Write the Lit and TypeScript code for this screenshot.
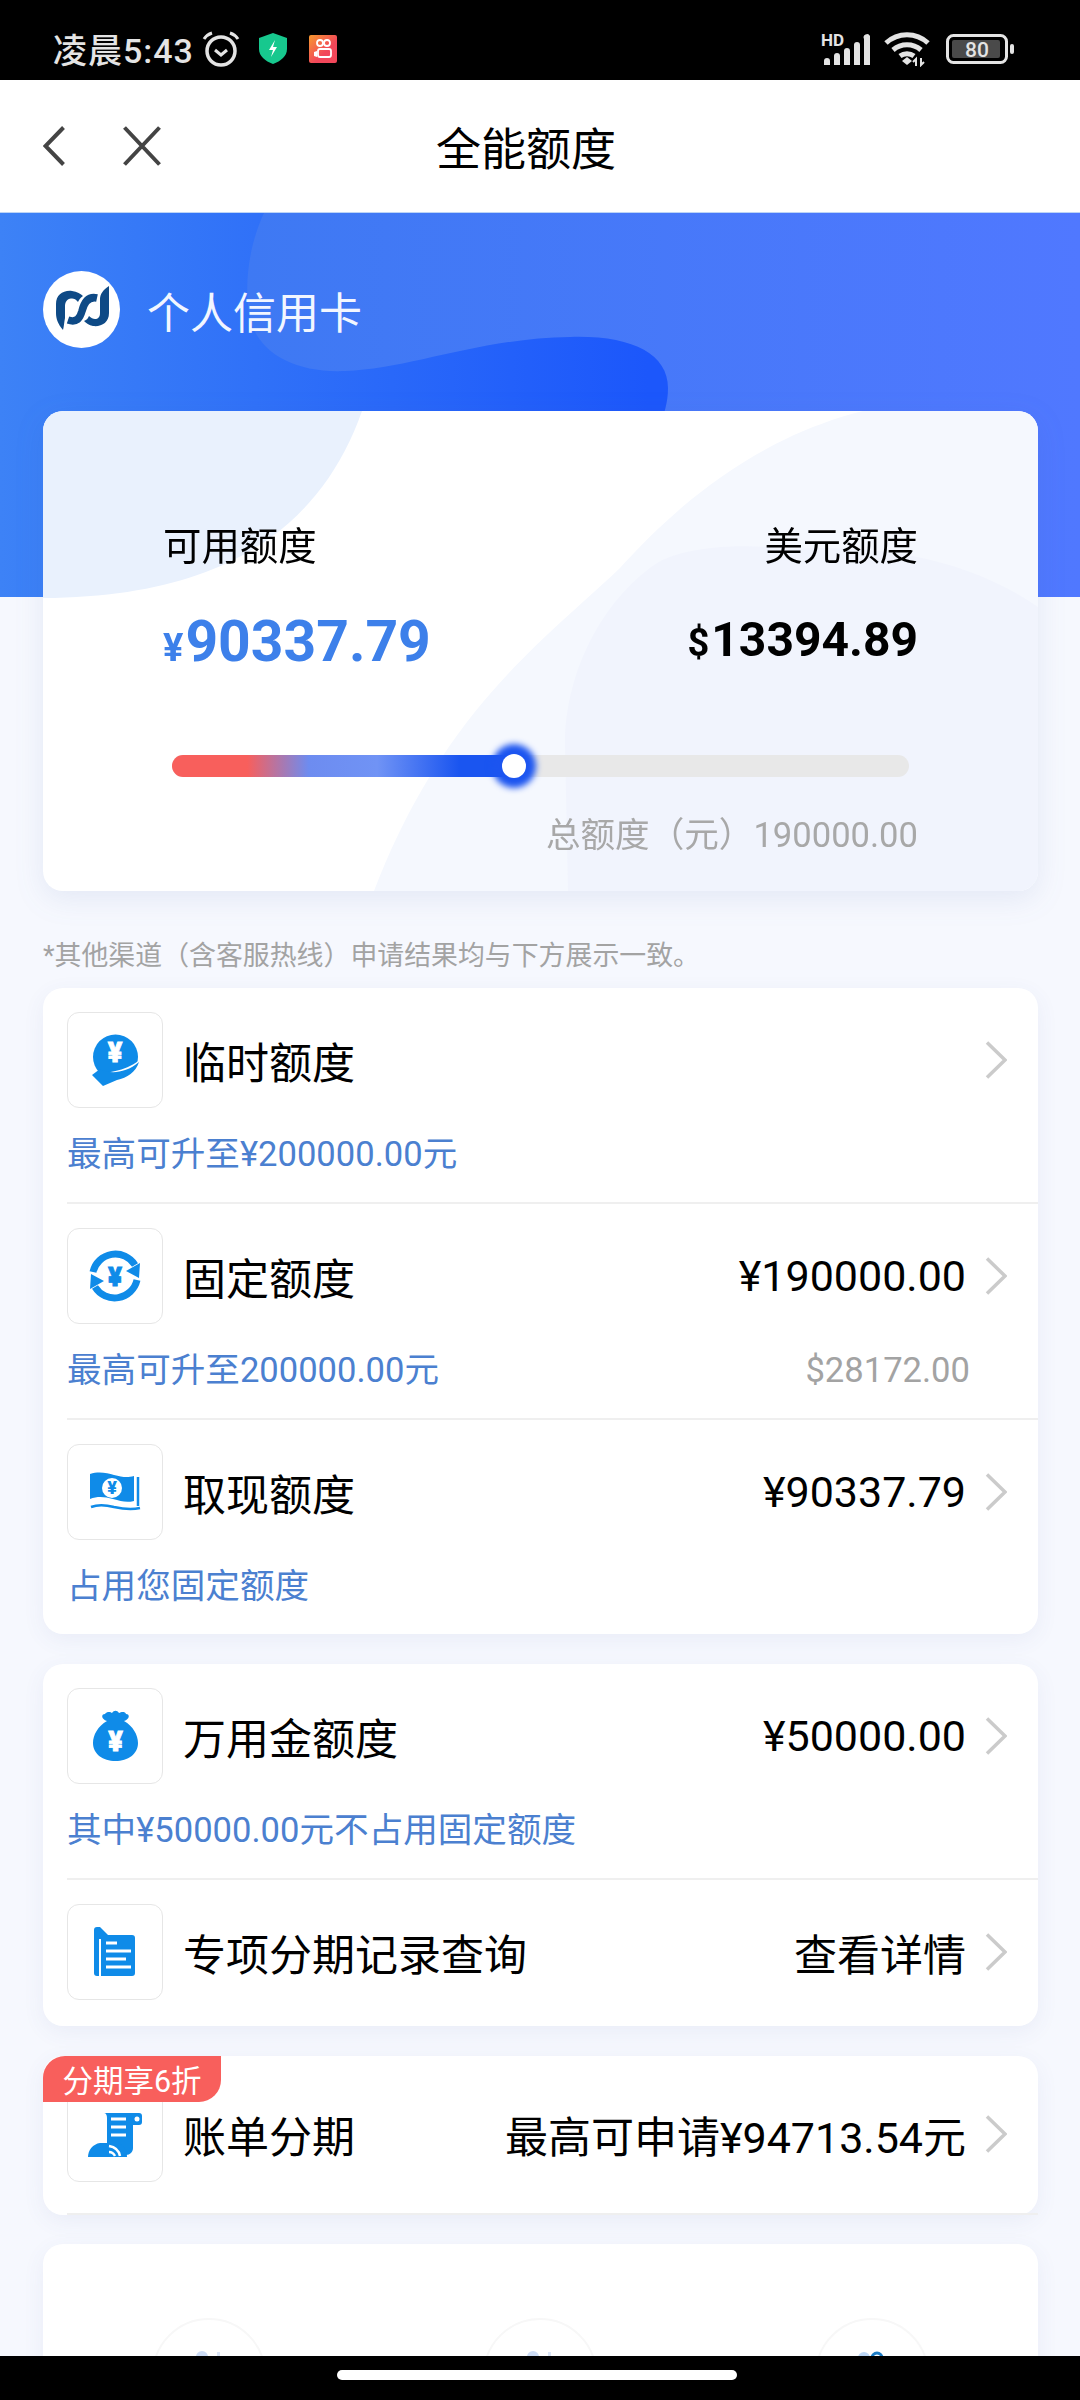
import { LitElement, html, css, svg } from "lit";
import { customElement } from "lit/decorators.js";

const yen = (x: number, y: number, size: number) =>
  svg`<text x=${x} y=${y} font-size=${size} font-weight="900" text-anchor="middle" fill="#fff" stroke="#fff" stroke-width="0.8" font-family="Roboto, sans-serif">¥</text>`;

// line icons of the list, all in the 96px box
const icons: Record<string, unknown> = {
  hand: svg`
    <circle cx="48.5" cy="45" r="22.5" fill="#0f8be8"/>
    <path d="M18 60C34 62 58 62 78 44L78 80 18 80z" fill="#fff"/>
    <path d="M25 63l8-6C42 62 58 62 72 50 69 60 60 66 50 68L36 74z" fill="#0f8be8"/>
    ${yen(48, 50, 27)}`,
  cycle: svg`
    <path d="M26 44A23 23 0 0 1 68 37" fill="none" stroke="#0f8be8" stroke-width="7"/>
    <path d="M70 52A23 23 0 0 1 28 59" fill="none" stroke="#0f8be8" stroke-width="7"/>
    <path d="M73 35l-1 15-13-7zM23 61l1-15 13 7z" fill="#0f8be8"/>
    <text x="48" y="58" font-size="26" font-weight="900" text-anchor="middle" fill="#0f8be8" stroke="#0f8be8" stroke-width="0.8" font-family="Roboto, sans-serif">¥</text>`,
  bill: svg`
    <path d="M23 30c9-3 17-1 24 1 8 2 13 3 20 1v25c-8 2-13 0-21-2-8-2-15-3-23 0z" fill="#0f8be8"/>
    <circle cx="45" cy="44" r="10" fill="#fff"/>
    <path d="M71 33v29M24 63c8-3 15-2 23 0 9 2 17 3 26 1" fill="none" stroke="#0f8be8" stroke-width="2.5"/>
    <text x="45" y="50" font-size="18" font-weight="900" text-anchor="middle" fill="#0f8be8" font-family="Roboto, sans-serif">¥</text>`,
  bag: svg`
    <path d="M40 33C34 31 34 26 38 26 40 23 44 24 45 25 47 22 50 22 52 25 54 24 58 23 59 26 63 26 63 31 57 33 66 38 71 47 71 55 71 66 61 73 48.500 73 36 73 26 66 26 55 26 47 31 38 40 33Z" fill="#0f8be8"/>
    ${yen(48.5, 63, 27)}`,
  doc: svg`
    <path d="M27 26c0-2 1-3 3-3h3l8 8h24c2 0 3 1 3 3v35c0 2-1 3-3 3H30c-2 0-3-1-3-3z" fill="#0f8be8"/>
    <path d="M33 35v37" stroke="#fff" stroke-width="2"/>
    <path d="M39 39h11M39 47h25M39 55h20M39 63h25" stroke="#fff" stroke-width="3"/>`,
  scroll: svg`
    <path d="M37 27h35c2 0 3 1 3 3v6c0 2-1 3-3 3h-6v23c0 4-3 7-7 7H40V32c0-3-1-5-3-5z" fill="#0f8be8"/>
    <path d="M44 33h15M44 41h15M44 49h15" stroke="#fff" stroke-width="3"/>
    <circle cx="70" cy="33" r="2.5" fill="#fff"/>
    <path d="M21 71c0-7 5-13 12-14h18c6 2 9 7 9 14z" fill="#0f8be8"/>
    <path d="M42 60c6 1 10 5 11 10M42 66c3 0 5 2 6 4" fill="none" stroke="#fff" stroke-width="2.5"/>`,
};

interface Row {
  icon: string;
  title: string;
  value?: string;
  sub?: string;
  subRight?: string;
}

const groups: Row[][] = [
  [
    { icon: "hand", title: "临时额度", sub: "最高可升至¥200000.00元" },
    { icon: "cycle", title: "固定额度", value: "¥190000.00", sub: "最高可升至200000.00元", subRight: "$28172.00" },
    { icon: "bill", title: "取现额度", value: "¥90337.79", sub: "占用您固定额度" },
  ],
  [
    { icon: "bag", title: "万用金额度", value: "¥50000.00", sub: "其中¥50000.00元不占用固定额度" },
    { icon: "doc", title: "专项分期记录查询", value: "查看详情" },
  ],
];

@customElement("app-root")
export class AppRoot extends LitElement {
  static styles = css`
    :host {
      display: block;
      font-family: Roboto, "Noto Sans CJK SC", sans-serif;
    }
    .page {
      width: 1080px;
      height: 2400px;
      display: flex;
      flex-direction: column;
      overflow: hidden;
      background: #f6f8fe;
    }
    .status {
      height: 80px;
      flex: none;
      box-sizing: border-box;
      background: #000;
      color: #e4e4e4;
      display: flex;
      align-items: center;
      padding: 17px 65px 0 53px;
    }
    .status svg {
      display: block;
      flex: none;
    }
    .time {
      font-size: 34px;
      font-weight: 500;
      letter-spacing: 1px;
      margin-right: 7px;
    }
    .spacer {
      flex: 1;
    }
    .nav {
      height: 132px;
      flex: none;
      background: #fff;
      border-bottom: 1px solid #bcd4f6;
      display: flex;
      align-items: center;
      padding-left: 43px;
      color: #000;
    }
    .nav svg {
      display: block;
    }
    .nav .title {
      font-size: 45px;
      margin-left: 275px;
    }
    .scroll {
      flex: 1;
      min-height: 0;
      overflow: hidden;
    }
    .hero {
      height: 384px;
      position: relative;
      background: linear-gradient(90deg, #3d82f6, #1c57fb 60%);
      overflow: hidden;
    }
    .hero-bg {
      position: absolute;
      inset: 0;
    }
    .hero-head {
      position: relative;
      display: flex;
      align-items: center;
      gap: 27px;
      padding: 58px 0 0 43px;
      color: #f2f6ff;
      font-size: 43px;
    }
    .logo {
      display: block;
      flex: none;
    }
    .limit {
      position: relative;
      margin: -186px 42px 0 43px;
      height: 480px;
      box-sizing: border-box;
      border-radius: 20px;
      background: #fff;
      overflow: hidden;
      padding: 111px 120px 0;
    }
    .limit-wrap {
      filter: drop-shadow(0 8px 14px rgba(70, 100, 170, 0.1));
    }
    .limit-bg {
      position: absolute;
      inset: 0;
    }
    .limit-grid {
      position: relative;
      display: flex;
      justify-content: space-between;
    }
    .limit-col.right {
      text-align: right;
    }
    .limit-label {
      font-size: 38.4px;
      line-height: 50px;
      color: #000;
    }
    .amount {
      margin-top: 36px;
      height: 68px;
      font-weight: 700;
      font-size: 57px;
      line-height: 68px;
      color: #3d80ea;
    }
    .amount small {
      font-size: 38px;
      margin-right: 2px;
    }
    .amount.usd {
      margin-top: 34px;
      font-size: 48px;
      color: #000;
    }
    .track {
      position: relative;
      height: 22px;
      margin: 79px 9px 0;
      background: #e8e8e8;
      border-radius: 11px;
    }
    .fill {
      height: 100%;
      border-radius: 11px 0 0 11px;
      background: linear-gradient(90deg, #f85f5c 22%, #6d8cf0 40%, #7093f5 60%, #1a55f0 84%);
    }
    .thumb {
      position: absolute;
      top: -1px;
      width: 24px;
      height: 24px;
      margin-left: -12px;
      border-radius: 50%;
      background: #fff;
      box-shadow: 0 0 6px 10px #1c55f0;
    }
    .total {
      position: relative;
      margin-top: 36px;
      font-size: 34.6px;
      line-height: 44px;
      text-align: right;
      color: #a8a8a8;
    }
    .note {
      margin: 45px 0 12px 43px;
      font-size: 26.9px;
      line-height: 40px;
      color: #a3a3a3;
    }
    .group {
      position: relative;
      margin: 0 42px 30px 43px;
      background: #fff;
      border-radius: 20px;
      box-shadow: 0 6px 22px rgba(70, 90, 150, 0.07);
    }
    .group.third {
      margin-bottom: 29px;
    }
    .row {
      margin-left: 24px;
      padding: 24px 31px 26px 0;
      border-bottom: 2px solid #efefef;
    }
    .row:last-child {
      border-bottom: none;
    }
    .row.single {
      padding-top: 30px;
      padding-bottom: 31px;
    }
    .main {
      display: flex;
      align-items: center;
    }
    .icon-box {
      width: 96px;
      height: 96px;
      flex: none;
      box-sizing: border-box;
      border: 1.5px solid #e6e6e6;
      border-radius: 12px;
      background: #fff;
    }
    .icon-box svg {
      display: block;
      margin: -1.5px;
    }
    .row-title {
      flex: 1;
      margin-left: 20px;
      font-size: 43px;
      color: #000;
    }
    .row-value {
      font-size: 43px;
      color: #000;
    }
    .chev {
      display: block;
      flex: none;
      margin-left: 19px;
    }
    .sub {
      display: flex;
      justify-content: space-between;
      margin-top: 24px;
      padding-right: 37px;
      font-size: 34.6px;
      line-height: 44px;
      color: #4b80d0;
    }
    .sub .usd {
      color: #a3a3a3;
    }
    .badge {
      position: absolute;
      left: 0;
      top: 0;
      width: 178px;
      height: 46px;
      display: flex;
      align-items: center;
      justify-content: center;
      background: #f85f5c;
      color: #fff;
      font-size: 30.5px;
      border-radius: 22px 0 22px 0;
    }
    .promo {
      height: 200px;
      margin-bottom: 0;
      display: grid;
      grid-template-columns: repeat(3, 1fr);
      padding-top: 74px;
      box-sizing: border-box;
    }
    .circle {
      justify-self: center;
      position: relative;
      width: 114px;
      height: 114px;
      border-radius: 50%;
      border: 2px solid #f7f7f7;
      box-sizing: border-box;
    }
    .circle svg {
      display: block;
      margin: 30px auto 0;
    }
    .bottom {
      height: 44px;
      flex: none;
      background: #000;
      display: flex;
      justify-content: center;
    }
    .home {
      width: 400px;
      height: 10px;
      margin: 14px 6px 0 0;
      border-radius: 5px;
      background: #fff;
    }
  `;

  private chevron() {
    return html`<svg class="chev" width="22" height="38" viewBox="0 0 22 38">
      <path d="M2 1.5 20 19 2 36.5" fill="none" stroke="#cbcbcb" stroke-width="3.5" />
    </svg>`;
  }

  private iconBox(name: string) {
    return html`<div class="icon-box">
      <svg width="96" height="96" viewBox="0 0 96 96">${icons[name]}</svg>
    </div>`;
  }

  private renderRow(r: Row) {
    return html`<div class="row">
      <div class="main">
        ${this.iconBox(r.icon)}
        <div class="row-title">${r.title}</div>
        ${r.value ? html`<div class="row-value">${r.value}</div>` : ""}
        ${this.chevron()}
      </div>
      ${r.sub
        ? html`<div class="sub">
            <span>${r.sub}</span>
            ${r.subRight ? html`<span class="usd">${r.subRight}</span>` : ""}
          </div>`
        : ""}
    </div>`;
  }

  private statusBar() {
    return html`<div class="status">
      <span class="time">凌晨5:43</span>
      <svg width="40" height="38" viewBox="0 0 40 38">
        <circle cx="20" cy="21" r="14" fill="none" stroke="#e4e4e4" stroke-width="3.5" />
        <path d="M14 20l6 5 6-5" fill="none" stroke="#e4e4e4" stroke-width="3" />
        <path d="M3 9c2-3 5-5 8-6M37 9c-2-3-5-5-8-6" fill="none" stroke="#e4e4e4" stroke-width="3" />
      </svg>
      <svg style="margin-left:18px" width="28" height="31" viewBox="0 0 28 31">
        <path d="M14 0l14 5v11c0 7-6 12-14 15C6 28 0 23 0 16V5z" fill="#17c88e" />
        <path d="M16 7l-6 10h4l-2 7 6-10h-4z" fill="#fff" />
      </svg>
      <svg style="margin-left:22px" width="28" height="28" viewBox="0 0 28 28">
        <defs>
          <linearGradient id="ks" x1="0" y1="0" x2="1" y2="1">
            <stop offset="0" stop-color="#f79a2e" />
            <stop offset="0.6" stop-color="#f2475a" />
          </linearGradient>
        </defs>
        <rect width="28" height="28" rx="2" fill="url(#ks)" />
        <circle cx="11" cy="8" r="3" fill="none" stroke="#fff" stroke-width="1.8" />
        <circle cx="18" cy="8" r="3" fill="none" stroke="#fff" stroke-width="1.8" />
        <rect x="9" y="14" width="13" height="8" rx="2" fill="none" stroke="#fff" stroke-width="1.8" />
        <path d="M8 16l-3 1v4l3 1z" fill="#fff" />
      </svg>
      <div class="spacer"></div>
      <svg width="50" height="36" viewBox="0 0 50 36">
        <text x="0" y="15" font-size="17" font-weight="700" fill="#e4e4e4" font-family="Roboto, sans-serif">HD</text>
        <path d="M3 34v-4a3 3 0 0 1 6 0v4zM13 34V25a3 3 0 0 1 6 0v9zM23 34V20a3 3 0 0 1 6 0v14zM33 34V14a3 3 0 0 1 6 0v20zM43 34V8a3 3 0 0 1 6-3v29z" fill="#e4e4e4" />
      </svg>
      <svg style="margin-left:12px" width="48" height="36" viewBox="0 0 48 36">
        <path d="M3 12c12-11 30-11 42 0M10 19c8-7 20-7 28 0M17 25c4-3 10-3 14 0" fill="none" stroke="#e4e4e4" stroke-width="5" />
        <path d="M19 30l5-4 5 4-5 4z" fill="#e4e4e4" />
        <path d="M33 35v-7l-3 3M38 27v7l3-3" fill="none" stroke="#e4e4e4" stroke-width="2" />
      </svg>
      <svg style="margin-left:15px" width="69" height="30" viewBox="0 0 69 30">
        <rect x="1.5" y="1.5" width="59" height="27" rx="6" fill="none" stroke="#e4e4e4" stroke-width="3" />
        <rect x="6" y="6" width="48" height="18" rx="2" fill="#4a4a4a" />
        <rect x="64" y="10" width="4" height="10" rx="2" fill="#e4e4e4" />
        <text x="31" y="23" font-size="21" font-weight="500" text-anchor="middle" fill="#e4e4e4" font-family="Roboto, sans-serif">80</text>
      </svg>
    </div>`;
  }

  render() {
    return html`<div class="page">
      ${this.statusBar()}
      <div class="nav">
        <svg width="22" height="40" viewBox="0 0 22 40">
          <path d="M20.5 1.5 2.5 20l18 18.5" fill="none" stroke="#444" stroke-width="4" />
        </svg>
        <svg style="margin-left:58px" width="38" height="40" viewBox="0 0 38 40">
          <path d="M1.5 1.5l35 37M36.5 1.5l-35 37" fill="none" stroke="#444" stroke-width="4" />
        </svg>
        <div class="title">全能额度</div>
      </div>
      <div class="scroll">
        <div class="hero">
          <svg class="hero-bg" width="1080" height="384" viewBox="0 0 1080 384">
            <defs>
              <linearGradient id="heroLight" x1="0" y1="0" x2="1" y2="0">
                <stop offset="0" stop-color="#3e79f3" />
                <stop offset="1" stop-color="#5078ff" />
              </linearGradient>
            </defs>
            <path
              d="M264 0C250 30 243 70 250 105 258 140 295 160 345 158 410 156 480 125 570 124 630 122 668 140 668 175 668 190 664 200 660 215L660 384 1080 384 1080 0Z"
              fill="url(#heroLight)"
            />
          </svg>
          <div class="hero-head">
            <svg class="logo" width="77" height="77" viewBox="0 0 77 77">
              <circle cx="38.5" cy="38.5" r="38.5" fill="#fff" />
              <path d="M20 59C15 53 13 48 13 42V33C13 24 20 19 29 20 34 20.500 38 23 40 25 37 27 36 29 35 31 33 28 30 27 28 27.500 24 28 22 31 22 35V47C21 52 21 55 20 59Z" fill="#0e4a86" />
              <path d="M25 49C34 52 37 47 39 40 41 32 45 25 54 27" fill="none" stroke="#0e4a86" stroke-width="7.500" />
              <path d="M66 15V42C66 52 58 56 50 55 46 54.500 43 52 41 50 44 49 45 47 46 45 48 47 50 48 52 48 55 48 57 46 57 42V28C57 23 60 19 66 15Z" fill="#0e4a86" />
            </svg>
            <span>个人信用卡</span>
          </div>
        </div>
        <div class="limit-wrap">
          <div class="limit">
            <svg class="limit-bg" width="995" height="480" viewBox="0 0 995 480">
              <path d="M0 0H319C280 110 190 186 0 187Z" fill="#e9f1fd" />
              <path d="M820 0C700 30 620 110 577 157 500 230 400 300 331 480H995V0Z" fill="#f5f8fe" />
              <path d="M995 196C930 150 840 132 749 138 680 130 630 140 611 154 560 190 522 260 522 334L525 480H995Z" fill="#f1f4fd" />
            </svg>
            <div class="limit-grid">
              <div class="limit-col">
                <div class="limit-label">可用额度</div>
                <div class="amount"><small>¥</small>90337.79</div>
              </div>
              <div class="limit-col right">
                <div class="limit-label">美元额度</div>
                <div class="amount usd"><small>$</small>13394.89</div>
              </div>
            </div>
            <div class="track">
              <div class="fill" style="width:${(342 / 737) * 100}%"></div>
              <div class="thumb" style="left:${(342 / 737) * 100}%"></div>
            </div>
            <div class="total">总额度（元）190000.00</div>
          </div>
        </div>
        <div class="note">*其他渠道（含客服热线）申请结果均与下方展示一致。</div>
        ${groups.map((g) => html`<div class="group">${g.map((r) => this.renderRow(r))}</div>`)}
        <div class="group third">
          <div class="row single">
            <div class="main">
              ${this.iconBox("scroll")}
              <div class="row-title">账单分期</div>
              <div class="row-value">最高可申请¥94713.54元</div>
              ${this.chevron()}
            </div>
          </div>
          <div class="badge">分期享6折</div>
        </div>
        <div class="group promo">
          <div class="circle">
            <svg width="40" height="10" viewBox="0 0 40 10"><circle cx="13" cy="7" r="6" fill="#cddcf5" /><rect x="28" y="2" width="3" height="8" fill="#dbe5f7" /></svg>
          </div>
          <div class="circle">
            <svg width="40" height="10" viewBox="0 0 40 10"><circle cx="13" cy="7" r="6" fill="#cddcf5" /><rect x="28" y="2" width="3" height="8" fill="#dbe5f7" /></svg>
          </div>
          <div class="circle">
            <svg width="40" height="10" viewBox="0 0 40 10"><circle cx="12" cy="8" r="6" fill="#bcd6f5" /><circle cx="25" cy="8" r="5" fill="none" stroke="#1c7cc4" stroke-width="3" /></svg>
          </div>
        </div>
      </div>
      <div class="bottom"><div class="home"></div></div>
    </div>`;
  }
}
